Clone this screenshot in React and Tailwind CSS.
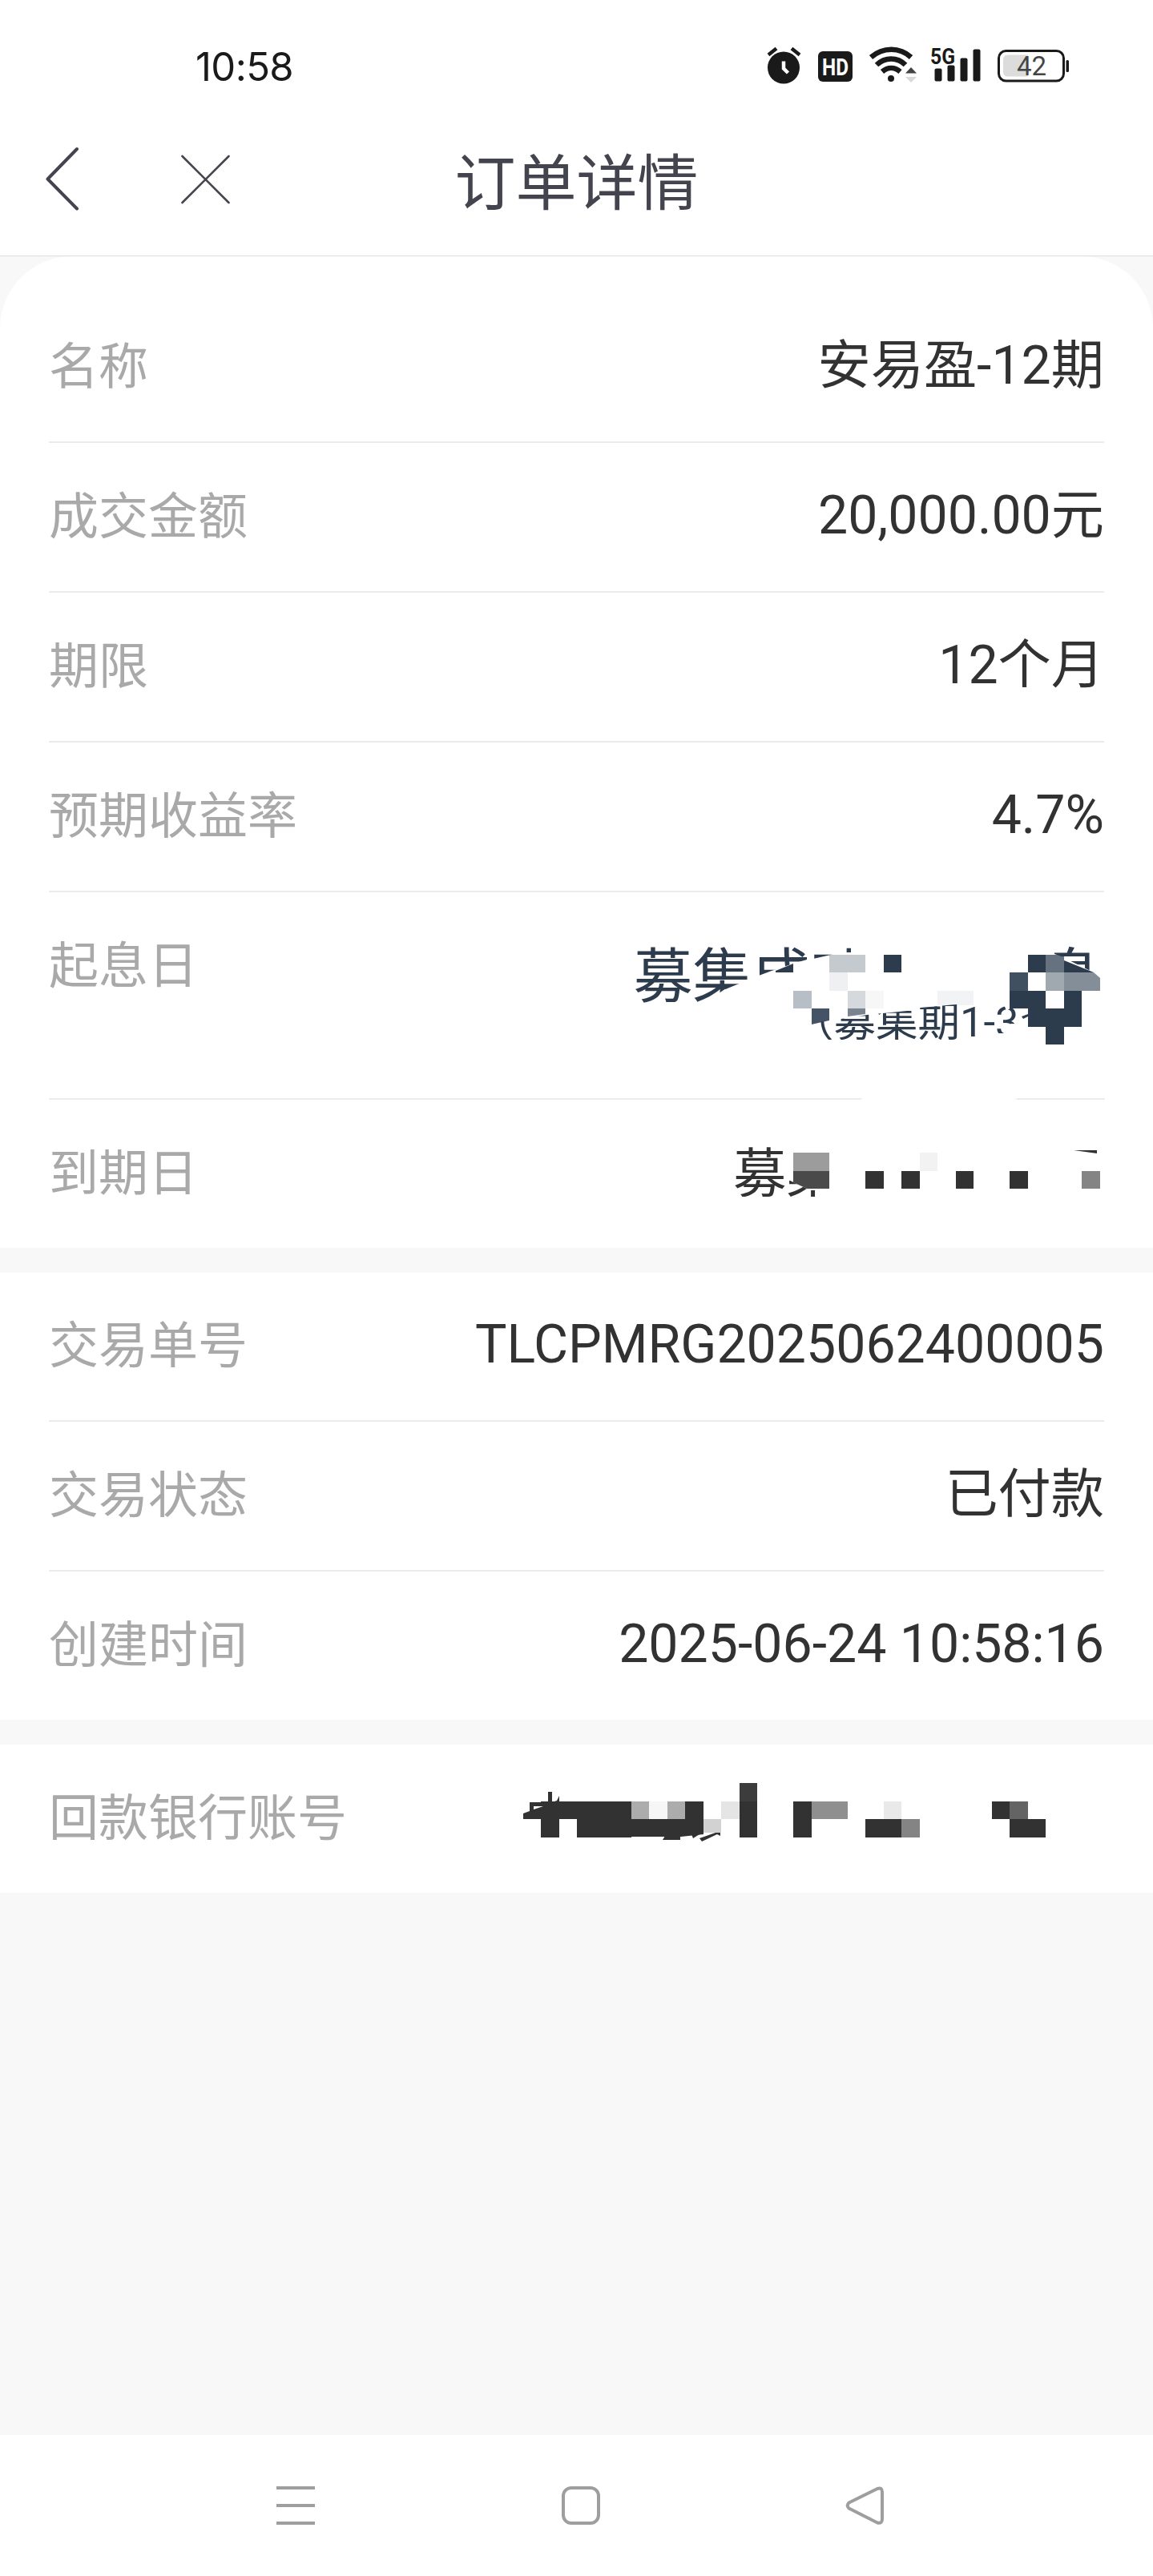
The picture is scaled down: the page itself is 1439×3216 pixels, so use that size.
import React from 'react';

const INK = '#323232';
const NAVY = '#2d3c4d';

const basicRows = [
  { label: '名称', value: '安易盈-12期' },
  { label: '成交金额', value: '20,000.00元' },
  { label: '期限', value: '12个月' },
  { label: '预期收益率', value: '4.7%' },
];

const tradeRows = [
  { label: '交易单号', value: 'TLCPMRG2025062400005', size: 'h-[186px] border-b-2' },
  { label: '交易状态', value: '已付款' },
  { label: '创建时间', value: '2025-06-24 10:58:16', size: 'h-[185px]' },
];

// [x, y, width, height, fill], relative to the top left of the row
const startBlocks = [
  [1035, 78, 45, 22, '#c5cacf'],
  [1035, 100, 23, 23, '#eff0f2'],
  [990, 123, 23, 22, '#b8bec6'],
  [1058, 123, 22, 22, '#d5d9dd'],
  [1080, 123, 23, 22, '#f7f7f8'],
  [1103, 78, 22, 22, NAVY],
  [1170, 123, 45, 18, '#f1f3f4'],
  [1283, 78, 22, 22, NAVY],
  [1305, 78, 23, 22, '#66727f'],
  [1260, 100, 23, 23, '#405060'],
  [1305, 100, 23, 23, '#a1a9b0'],
  [1260, 123, 45, 22, NAVY],
  [1328, 123, 22, 22, NAVY],
  [1283, 145, 67, 23, NAVY],
  [1305, 168, 23, 22, NAVY],
];

const endBlocks = [
  [990, 66, 45, 23, '#9c9c9c'],
  [1148, 66, 22, 23, '#f2f2f2'],
  [1080, 89, 23, 22, INK],
  [1125, 89, 23, 22, INK],
  [1193, 89, 22, 22, INK],
  [1260, 89, 23, 22, INK],
  [1350, 89, 23, 22, '#848484'],
];

const bankBlocks = [
  [675, 71, 23, 45, INK],
  [698, 71, 90, 22, INK],
  [720, 93, 68, 23, INK],
  [788, 71, 22, 22, '#acacac'],
  [810, 71, 23, 22, '#f6f6f6'],
  [833, 71, 22, 22, '#acacac'],
  [855, 71, 23, 22, INK],
  [878, 93, 22, 17, '#d2d2d2'],
  [900, 71, 23, 22, '#e5e5e5'],
  [923, 48, 22, 23, '#3c3c3c'],
  [923, 71, 22, 45, INK],
  [990, 71, 23, 45, INK],
  [1013, 71, 45, 22, '#8f8f8f'],
  [1103, 71, 22, 22, '#e9e9e9'],
  [1080, 93, 45, 23, INK],
  [1125, 93, 23, 23, '#848484'],
  [1238, 71, 22, 22, INK],
  [1260, 71, 23, 22, '#646464'],
  [1260, 93, 45, 23, INK],
];

const Blocks = ({ items }) =>
  items.map(([x, y, w, h, fill]) => (
    <rect key={`${x}-${y}`} x={x} y={y} width={w} height={h} fill={fill} />
  ));

const StatusBar = () => (
  <div className="flex h-[140px] items-center justify-between pl-[244px] pr-[104px] pt-[26px]">
    <span className="font-['Inter'] text-[49px] leading-none tracking-[-0.6px] text-[#1a1a1a]">10:58</span>
    <svg width="380" height="62" viewBox="0 -6 380 62" className="-mt-[2px]" fill="#1a1a1a">
      {/* alarm */}
      <g>
        <circle cx="23" cy="27.5" r="20" />
        <path d="M4 11.5L14 3.5M43 11.5L33 3.5" stroke="#1a1a1a" strokeWidth="4.5" />
        <path d="M23 19.5V28.5L28.5 34" fill="none" stroke="#fff" strokeWidth="4.5" />
      </g>
      {/* hd */}
      <rect x="66" y="7" width="43" height="38" rx="6" />
      <text x="71" y="37" textLength="33" lengthAdjust="spacingAndGlyphs" fill="#fff" fontSize="30" fontWeight="700" fontFamily="Roboto">HD</text>
      {/* wifi */}
      <g fill="none" stroke="#1a1a1a" strokeWidth="6.5">
        <path d="M132 14.5C147 1.5 168 1.5 182 14.5" />
        <path d="M139 24C149.5 14 165 14 175 24" />
        <path d="M146 32.5C153 26.5 161.5 26.5 168.5 32.5" />
      </g>
      <circle cx="157" cy="41" r="4" />
      <path d="M175 34.5L182 27L189 34.5Z" fill="#444" />
      <path d="M175 39L189 39L182 46Z" fill="#d9d9d9" />
      {/* signal */}
      <text x="206" y="22.5" textLength="31" lengthAdjust="spacingAndGlyphs" fontSize="28" fontWeight="700" fontFamily="Roboto">5G</text>
      <rect x="211.5" y="28.5" width="9" height="16" rx="2" />
      <rect x="227.5" y="24.5" width="9" height="20" rx="2" />
      <rect x="243.5" y="15.5" width="9" height="29" rx="2" />
      <rect x="259.5" y="4.5" width="9" height="40" rx="2" />
      {/* battery */}
      <rect x="291.5" y="6.5" width="81" height="37.5" rx="9" fill="none" stroke="#1a1a1a" strokeWidth="3" />
      <path d="M303 11.5H328V38.5H303Q297 38.5 297 32.5V17.5Q297 11.5 303 11.5Z" fill="#dcdcdc" />
      <rect x="375.5" y="18" width="3.5" height="15" rx="1.5" />
      <text x="332.5" y="37" textAnchor="middle" fill="#444" fontSize="33" fontFamily="Roboto">42</text>
    </svg>
  </div>
);

const Header = () => (
  <header className="relative flex h-[180px] items-center justify-center border-b border-[#dddddd]">
    <svg className="absolute left-[50px] top-[40px]" width="250" height="90" viewBox="50 180 250 90" fill="none" stroke="#44444f" strokeLinecap="round" strokeLinejoin="round">
      <path d="M96 186L59.5 223.500L96 260.500" strokeWidth="4" />
      <path d="M227.5 195L285.5 253M285.5 195L227.5 253" strokeWidth="2.6" />
    </svg>
    <h1 className="text-[76px] leading-none text-[#44444f]">订单详情</h1>
  </header>
);

const Label = ({ children }) => (
  <span className="text-[62px] leading-none text-[#a9a9a9]">{children}</span>
);

const Row = ({ label, value, size = 'h-[187px] border-b-2' }) => (
  <div className="px-[61px]">
    <div className={`flex items-center justify-between border-[#ebebeb] ${size}`}>
      <Label>{label}</Label>
      <span className="pb-[3px] text-[66.2px] leading-none text-[#323232]">{value}</span>
    </div>
  </div>
);

export default function App() {
  return (
    <div className="flex h-[3216px] w-[1439px] flex-col bg-[#f8f8f8] font-['Roboto','Noto_Sans_CJK_SC',sans-serif]">
      <div className="bg-white">
        <StatusBar />
        <Header />
      </div>

      <section className="rounded-t-[90px] bg-white pt-[46px]">
        {basicRows.map((row) => (
          <Row key={row.label} {...row} />
        ))}

        {/* start date */}
        <div className="relative h-[259px] px-[61px] pt-[62px]">
          <Label>起息日</Label>
          <svg className="absolute left-0 top-0" width="1439" height="259" viewBox="0 0 1439 259">
            <defs>
              <clipPath id="start-title">
                <path d="M780 50H1007V84L990 89L963 98L947 104H940V108L920 115L903 122L896 127V170H780Z" />
                <path d="M1010 60H1062V75H1045L1037 78L1015 83H1010Z" />
              </clipPath>
              <clipPath id="start-tail">
                <path d="M1316 50H1373V100H1365L1322 79L1316 77Z" />
              </clipPath>
              <clipPath id="start-note">
                <path d="M1010 163L1058 157L1082 153L1142 147L1149 144L1193 140H1253L1256 148L1262 144L1270 148V164L1262 164L1253 168V176H1243V184H1010Z" />
              </clipPath>
            </defs>
            <Blocks items={startBlocks} />
            <path d="M968 98L990 89V100H968Z" fill={NAVY} />
            <path d="M1013 145H1035V160L1013 165Z" fill="#445365" />
            <path d="M1058 145H1080V152L1058 155Z" fill="#7a8491" />
            <path d="M1328 85L1365 100H1328Z" fill={NAVY} />
            <path d="M1328 100H1365L1373 107V123H1328Z" fill="#838e98" />
            <path d="M1275 155L1283 152V155L1277 158Z" fill={NAVY} />
            <text x="790.500" y="131" clipPath="url(#start-title)" fontSize="74" fill={NAVY}>募集成功</text>
            <text x="1300" y="131" clipPath="url(#start-tail)" fontSize="74" fill={NAVY}>息</text>
            <text x="988" y="179.500" clipPath="url(#start-note)" fontSize="52.500" fill={NAVY}>（募集期1-3</text>
            <path d="M61 257H1077L1073 259H61ZM1270 257H1379V259H1267Z" fill="#ebebeb" />
          </svg>
        </div>

        {/* end date */}
        <div className="relative flex h-[185px] items-center px-[61px]">
          <Label>到期日</Label>
          <svg className="absolute left-0 top-0" width="1439" height="185" viewBox="0 0 1439 185">
            <defs>
              <clipPath id="end-title">
                <path d="M900 40H982V99L1007 111V113H1018V121H900Z" />
              </clipPath>
            </defs>
            <Blocks items={endBlocks} />
            <text x="915" y="115.500" clipPath="url(#end-title)" fontSize="66.500" fill={INK}>募集</text>
            <path d="M990 89H1035V111H1007L990 103Z" fill="#4a4a4a" />
            <path d="M1340 63H1369V67Z" fill={INK} />
          </svg>
        </div>
      </section>

      <section className="mt-[31px] bg-white">
        {tradeRows.map((row) => (
          <Row key={row.label} {...row} />
        ))}
      </section>

      <section className="relative mt-[31px] flex h-[185px] items-center bg-white px-[61px]">
        <Label>回款银行账号</Label>
        <svg className="absolute left-0 top-0" width="1439" height="185" viewBox="0 0 1439 185">
          <Blocks items={bankBlocks} />
          <path d="M653 86L661 83V72H684V59H689V72L695 70L698 64V93H653Z" fill={INK} />
          <path d="M666 77H678L666 81Z" fill="#fff" />
          <path d="M788 93H878V112L850 115H788Z" fill={INK} />
          <path d="M830 114H849V119H827ZM863 112H873L865 117ZM873 117L893 110H899V114L895 112L876 121Z" fill={INK} />
        </svg>
      </section>

      <nav className="mt-auto h-[176px] bg-white">
        <svg width="1439" height="176" viewBox="0 0 1439 176" fill="none" stroke="#9e9e9e" strokeWidth="4" strokeLinejoin="round">
          <path d="M345 66H393M345 88H393M345 110H393" />
          <rect x="703" y="66" width="44" height="44" rx="10" />
          <path d="M1095 67L1059.5 84.500Q1056 88 1059.5 91.500L1095 109.500Q1101 111 1101 105V71Q1101 65 1095 67Z" />
        </svg>
      </nav>
    </div>
  );
}
